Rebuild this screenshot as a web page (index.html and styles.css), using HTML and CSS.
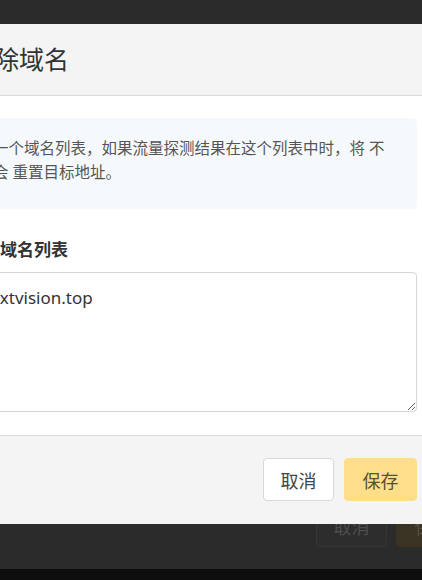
FILE: index.html
```html
<!DOCTYPE html>
<html lang="zh-CN">
<head>
<meta charset="utf-8">
<title>排除域名</title>
<link rel="stylesheet" href="styles.css">
</head>
<body>
<div class="page">
  <div class="page-main">
    <div class="page-actions">
      <button class="pbtn pbtn-cancel" type="button">取消</button>
      <button class="pbtn pbtn-save" type="button">保存</button>
    </div>
  </div>
  <div class="page-strip"></div>
</div>

<div class="modal" role="dialog">
  <div class="modal-header">
    <h2 class="modal-title">排除域名</h2>
  </div>
  <div class="modal-body">
    <div class="info">一个域名列表，如果流量探测结果在这个列表中时，将 不会 重置目标地址。</div>
    <label class="field-label" for="domains">排除域名列表</label>
    <textarea id="domains" class="field-input">nextvision.top</textarea>
  </div>
  <div class="modal-footer">
    <button class="btn btn-cancel" type="button">取消</button>
    <button class="btn btn-save" type="button">保存</button>
  </div>
</div>
</body>
</html>
```
FILE: styles.css
```css
* { box-sizing: border-box; }

html, body {
  margin: 0;
  padding: 0;
  width: 422px;
  height: 580px;
  overflow: hidden;
}

body {
  position: relative;
  font-family: "Noto Sans", "Noto Sans CJK SC", sans-serif;
  background: #2b2b2b;
}

.page {
  display: flex;
  flex-direction: column;
  height: 580px;
}

.page-main {
  flex: 1;
  display: flex;
  flex-direction: column;
  justify-content: flex-end;
  background: #2b2b2b;
}

.page-actions {
  display: flex;
  justify-content: flex-end;
  gap: 9px;
  margin-right: -47px;
  padding: 0 0 22px;
}

.pbtn {
  height: 43px;
  padding: 0 16.5px;
  font-family: inherit;
  font-size: 18px;
  border-radius: 4px;
  border: 1px solid #363636;
}

.pbtn-cancel { background: #2d2d2d; color: #4c4c4c; }
.pbtn-save { padding: 0 17.5px; background: #3a3323; border-color: #3a3323; color: #5a5040; }

.page-strip {
  height: 11px;
  background: #0e0e0e;
}

/* modal lies over the page */
.modal {
  position: absolute;
  top: 24px;
  left: -50px;
  width: 483px;
  background: #fff;
  display: flex;
  flex-direction: column;
}

.modal-header {
  height: 72px;
  display: flex;
  align-items: center;
  padding: 0 16px 2px 19px;
  background: #f4f4f4;
  border-bottom: 1px solid #dcdcdc;
}

.modal-title {
  margin: 0;
  font-size: 25px;
  font-weight: 400;
  color: #333;
  line-height: 1.2;
}

.modal-body {
  display: flex;
  flex-direction: column;
  padding: 22px 16px 23px;
}

.info {
  background: #f5f9fb;
  border-radius: 5px;
  padding: 18px 24px 25px 27px;
  font-size: 15.5px;
  line-height: 24px;
  color: #555;
}

.field-label {
  margin-top: 29px;
  font-size: 17px;
  font-weight: 700;
  color: #333;
  line-height: 24px;
}

.field-input {
  margin-top: 10px;
  height: 140px;
  padding: 12px 13px;
  font-family: "Noto Sans", "Noto Sans CJK SC", sans-serif;
  font-size: 17px;
  line-height: 26px;
  color: #333;
  border: 1px solid #d6d6d6;
  border-radius: 4px;
  background: #fff;
  resize: vertical;
}

.modal-footer {
  display: flex;
  justify-content: flex-end;
  gap: 10px;
  padding: 22px 16px 23px;
  background: #f4f4f4;
  border-top: 1px solid #dcdcdc;
}

.btn {
  height: 43px;
  padding: 0 16.5px;
  font-family: inherit;
  font-size: 18px;
  border-radius: 4px;
  border: 1px solid #d9d9d9;
  cursor: pointer;
}

.btn-cancel { background: #fff; color: #444; }
.btn-save { padding: 0 17.5px; background: #ffde89; border-color: #ffde89; color: #5b5030; }
```
